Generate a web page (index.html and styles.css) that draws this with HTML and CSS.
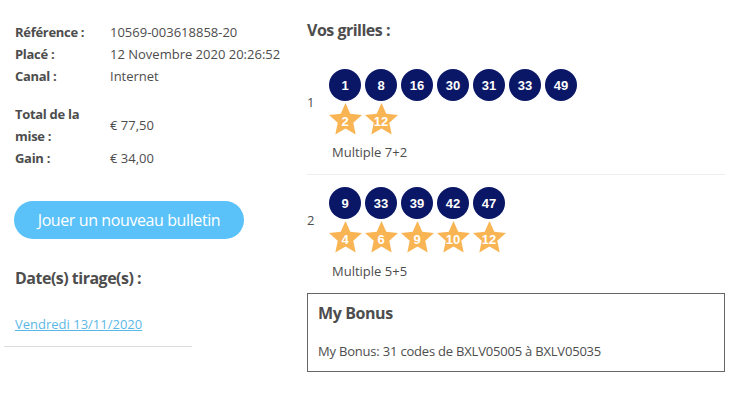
FILE: index.html
```html
<!DOCTYPE html>
<html lang="fr">
<head>
<meta charset="utf-8">
<link rel="stylesheet" href="styles.css">
</head>
<body>
<div class="page">
  <div class="left">
    <div class="info">
      <div class="lbl">Référence :</div><div class="val">10569-003618858-20</div>
      <div class="lbl">Placé :</div><div class="val">12 Novembre 2020 20:26:52</div>
      <div class="lbl">Canal :</div><div class="val">Internet</div>
    </div>
    <div class="info info2">
      <div class="lbl">Total de la mise :</div><div class="val mid">€ 77,50</div>
      <div class="lbl">Gain :</div><div class="val">€ 34,00</div>
    </div>
    <a class="btn">Jouer un nouveau bulletin</a>
    <h2 class="h">Date(s) tirage(s) :</h2>
    <a class="link" href="#">Vendredi 13/11/2020</a>
    <hr class="sep">
  </div>
  <div class="right">
    <h2 class="h vos">Vos grilles :</h2>
    <div class="grid">
      <div class="idx">1</div>
      <div class="nums">
        <div class="balls">
          <span class="ball">1</span><span class="ball">8</span><span class="ball">16</span><span class="ball">30</span><span class="ball">31</span><span class="ball">33</span><span class="ball">49</span>
        </div>
        <div class="stars">
          <span class="star"><svg viewBox="0 0 34 34"><polygon points="17,1 21.9,12.1 34,13.4 25,21.5 27.5,33.4 17,27.3 6.5,33.4 9,21.5 0,13.4 12.1,12.1"/></svg><b>2</b></span>
          <span class="star"><svg viewBox="0 0 34 34"><polygon points="17,1 21.9,12.1 34,13.4 25,21.5 27.5,33.4 17,27.3 6.5,33.4 9,21.5 0,13.4 12.1,12.1"/></svg><b>12</b></span>
        </div>
      </div>
    </div>
    <div class="mult">Multiple 7+2</div>
    <hr class="gsep">
    <div class="grid">
      <div class="idx">2</div>
      <div class="nums">
        <div class="balls">
          <span class="ball">9</span><span class="ball">33</span><span class="ball">39</span><span class="ball">42</span><span class="ball">47</span>
        </div>
        <div class="stars">
          <span class="star"><svg viewBox="0 0 34 34"><polygon points="17,1 21.9,12.1 34,13.4 25,21.5 27.5,33.4 17,27.3 6.5,33.4 9,21.5 0,13.4 12.1,12.1"/></svg><b>4</b></span>
          <span class="star"><svg viewBox="0 0 34 34"><polygon points="17,1 21.9,12.1 34,13.4 25,21.5 27.5,33.4 17,27.3 6.5,33.4 9,21.5 0,13.4 12.1,12.1"/></svg><b>6</b></span>
          <span class="star"><svg viewBox="0 0 34 34"><polygon points="17,1 21.9,12.1 34,13.4 25,21.5 27.5,33.4 17,27.3 6.5,33.4 9,21.5 0,13.4 12.1,12.1"/></svg><b>9</b></span>
          <span class="star"><svg viewBox="0 0 34 34"><polygon points="17,1 21.9,12.1 34,13.4 25,21.5 27.5,33.4 17,27.3 6.5,33.4 9,21.5 0,13.4 12.1,12.1"/></svg><b>10</b></span>
          <span class="star"><svg viewBox="0 0 34 34"><polygon points="17,1 21.9,12.1 34,13.4 25,21.5 27.5,33.4 17,27.3 6.5,33.4 9,21.5 0,13.4 12.1,12.1"/></svg><b>12</b></span>
        </div>
      </div>
    </div>
    <div class="mult mult2">Multiple 5+5</div>
    <div class="bonus">
      <h3 class="btitle">My Bonus</h3>
      <p class="btext">My Bonus: 31 codes de BXLV05005 à BXLV05035</p>
    </div>
  </div>
</div>
</body>
</html>
```

FILE: styles.css
```css
* { box-sizing: border-box; }
body {
  margin: 0;
  font-family: "Open Sans", "Liberation Sans", sans-serif;
  font-size: 13px;
  color: #4d4d4d;
  background: #fff;
}
.page {
  display: flex;
  align-items: flex-start;
}
.left {
  width: 188px;
  margin-left: 4px;
  padding-top: 21px;
  flex-shrink: 0;
}
.info {
  display: grid;
  grid-template-columns: 95px auto;
  padding-left: 11px;
  line-height: 22px;
  white-space: nowrap;
}
.info2 { margin-top: 16px; }
.info2 .lbl { white-space: normal; width: 80px; }
.lbl { font-weight: 700; letter-spacing: -0.3px; }
.mid { align-self: center; }
.btn {
  display: flex;
  align-items: center;
  justify-content: center;
  margin: 32px 0 0 10px;
  width: 230px;
  height: 38px;
  border-radius: 19px;
  background: #5bc2f9;
  color: #fff;
  font-size: 16px;
  letter-spacing: -0.4px;
  white-space: nowrap;
}
.h {
  margin: 0;
  font-size: 16px;
  font-weight: 700;
  line-height: 22px;
  letter-spacing: -0.5px;
}
.left .h { margin: 28px 0 0 11px; }
.link {
  display: block;
  margin: 24px 0 0 11px;
  color: #5bb8e6;
  line-height: 22px;
  font-size: 13px;
}
.sep {
  margin: 11px 0 0;
  border: 0;
  border-top: 1px solid #ddd;
}
.right {
  margin-left: 115px;
  width: 418px;
  padding-top: 19px;
}
.vos { margin-bottom: 28px; }
.grid {
  display: flex;
  align-items: center;
}
.idx { width: 22px; }
.balls, .stars { display: flex; gap: 4px; }
.ball {
  width: 32px;
  height: 32px;
  border-radius: 50%;
  background: #0a1766;
  color: #fff;
  font-family: "Liberation Sans", Arial, sans-serif;
  font-weight: 700;
  font-size: 13px;
  display: flex;
  align-items: center;
  justify-content: center;
}
.stars { margin-top: 1px; }
.star {
  position: relative;
  width: 32px;
  height: 33px;
}
.star svg { width: 33px; height: 33px; display: block; fill: #f9b454; margin-left: -0.5px; }
.star b {
  position: absolute;
  left: 0; right: 0; top: 12px;
  text-align: center;
  color: #fff;
  font-family: "Liberation Sans", Arial, sans-serif;
  font-size: 13px;
  line-height: 16px;
}
.mult {
  margin: 6px 0 0 25px;
  line-height: 22px;
}
.mult2 { margin-top: 7px; }
.gsep {
  margin: 11px 0 12px;
  border: 0;
  border-top: 1px solid #eee;
}
.bonus {
  margin-top: 11px;
  border: 1px solid #666;
  padding: 8px 10px 10px;
  height: 79px;
}
.btitle {
  margin: 0;
  font-size: 16px;
  font-weight: 700;
  line-height: 22px;
  letter-spacing: -0.4px;
}
.btext { margin: 16px 0 0; line-height: 22px; letter-spacing: -0.2px; }
```
